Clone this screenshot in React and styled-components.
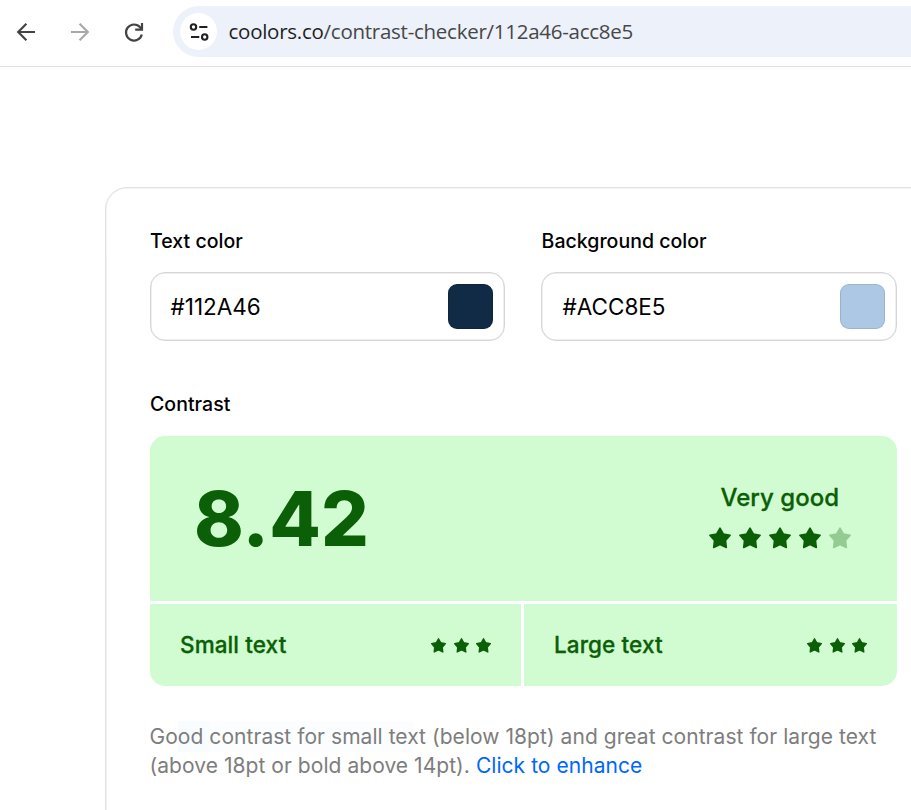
import React from "react";
import styled, { createGlobalStyle } from "styled-components";

const GlobalStyle = createGlobalStyle`
  *, *::before, *::after { box-sizing: border-box; }
  html, body { margin: 0; padding: 0; background: #fff; overflow: hidden; }
  body { font-family: Inter, "Liberation Sans", sans-serif; color: #000; }
`;

const Window = styled.div`
  height: 810px;
  overflow: hidden;
  display: flex;
  flex-direction: column;
`;

const Toolbar = styled.header`
  flex: none;
  height: 67px;
  display: flex;
  align-items: flex-start;
  border-bottom: 1px solid #dfe1e4;
`;

const NavButtons = styled.nav`
  display: flex;
  gap: 26px;
  padding: 18px 0 0 12px;
  width: 173px;
`;

const NavButton = styled.button`
  flex: none;
  width: 28px;
  height: 28px;
  padding: 0;
  border: 0;
  background: none;
  color: ${(p) => (p.$muted ? "#a9a9a9" : "#434343")};
  svg { display: block; }
`;

const AddressBar = styled.div`
  flex: 1;
  height: 51px;
  margin-top: 6px;
  padding-left: 7px;
  display: flex;
  align-items: center;
  border-radius: 26px 0 0 26px;
  background: #ecf1fa;
`;

const SiteInfo = styled.div`
  width: 37px;
  height: 37px;
  border-radius: 50%;
  background: #fff;
  svg { display: block; }
`;

const Url = styled.div`
  margin: -1px 0 0 11.5px;
  font-family: "Open Sans", "Noto Sans", sans-serif;
  font-size: 20.5px;
  letter-spacing: -0.26px;
  line-height: 28px;
  white-space: nowrap;
  color: #474747;
`;

const Host = styled.span`
  color: #1f1f1f;
`;

const Card = styled.main`
  flex: none;
  width: 1200px;
  height: 900px;
  margin: 120px 0 0 105px;
  padding: 40px 0 0 44px;
  border: 1px solid #e2e2e2;
  border-radius: 22px;
  box-shadow: inset 0 0 0 0.5px #e8e8e8;
`;

const Content = styled.div`
  width: 747px;
`;

const Fields = styled.div`
  display: grid;
  grid-template-columns: 355px 356px;
  column-gap: 36px;
`;

const Label = styled.div`
  height: ${(p) => (p.$tall ? "45px" : "44px")};
  padding: 1px 0 0 ${(p) => p.$inset || "0"};
  font-size: 19.5px;
  font-weight: 500;
  letter-spacing: 0.03px;
  line-height: 24px;
`;

const ColorInput = styled.div`
  height: 69px;
  display: flex;
  align-items: center;
  justify-content: space-between;
  padding: 0 11px 0 ${(p) => (p.$inset ? "20.5px" : "19.5px")};
  border: 1px solid #d6d6d6;
  border-radius: 15px;
  box-shadow: inset 0 0 0 0.5px #dedede;
  font-size: 22.5px;
`;

const Swatch = styled.div`
  width: 45px;
  height: 45px;
  border: 1px solid rgba(0, 0, 0, 0.1);
  border-radius: 9px;
  background: ${(p) => p.$color};
`;

const Contrast = styled.section`
  margin-top: 50px;
`;

const Score = styled.div`
  display: grid;
  grid-template-columns: 371px 373px;
  grid-template-rows: 165px 82px;
  gap: 3px;
  border-radius: 15px;
  overflow: hidden;
  color: #0b5f06;
`;

const Overall = styled.div`
  grid-column: 1 / -1;
  display: flex;
  align-items: center;
  justify-content: space-between;
  padding: 0 46px 0 44px;
  background: #d1fbd0;
`;

const Ratio = styled.div`
  margin-top: 1px;
  font-size: 75px;
  font-weight: 800;
  letter-spacing: 0.2px;
  line-height: 90px;
`;

const Verdict = styled.div`
  display: flex;
  flex-direction: column;
  align-items: center;
  margin-top: -5px;
  font-size: 24px;
  font-weight: 500;
  letter-spacing: 0.05px;
  line-height: 30px;
  -webkit-text-stroke: 0.3px currentColor;
`;

const Grade = styled.div`
  display: flex;
  align-items: center;
  justify-content: space-between;
  padding: 0 30px 1px 30px;
  background: #d1fbd0;
  font-size: 22.5px;
  font-weight: 500;
  letter-spacing: 0.1px;
  -webkit-text-stroke: 0.3px currentColor;
`;

const StarRow = styled.div`
  display: flex;
  gap: ${(p) => (p.$large ? "8.1px" : "7.3px")};
  margin-top: ${(p) => (p.$large ? "14px" : "2px")};
`;

const StarIcon = styled.svg`
  display: block;
  width: ${(p) => (p.$large ? "22px" : "15px")};
  height: ${(p) => (p.$large ? "22px" : "15px")};
  opacity: ${(p) => (p.$dim ? 0.3 : 1)};
  fill: currentColor;
  stroke: currentColor;
  stroke-width: ${(p) => (p.$large ? 1.6 : 2)};
  stroke-linejoin: round;
`;

const Note = styled.p`
  position: relative;
  isolation: isolate;
  margin: 36px 0 0 -0.5px;
  font-size: 21px;
  letter-spacing: 0.05px;
  line-height: 29px;
  color: #7d7d7d;
  white-space: nowrap;
`;

const Tint = styled.span`
  position: absolute;
  z-index: -1;
  top: -1px;
  left: 28px;
  width: 236px;
  height: 31px;
  background: linear-gradient(90deg, #f9fcff 31px, #fbfdff 31px);
`;

const Enhance = styled.a`
  color: #0066ff;
`;

function Stars({ count, filled = count, large }) {
  return (
    <StarRow $large={large}>
      {Array.from({ length: count }, (_, i) => (
        <StarIcon key={i} viewBox="0 0 22 22" $large={large} $dim={i >= filled}>
          <path d="M11 1.2 14.3 7 21.1 8.3 16.5 13.5 17.3 20.5 11 17.6 4.7 20.5 5.5 13.5 .9 8.3 7.7 7Z" />
        </StarIcon>
      ))}
    </StarRow>
  );
}

function Field({ label, value, labelInset }) {
  return (
    <div>
      <Label $inset={labelInset}>{label}</Label>
      <ColorInput $inset={labelInset}>
        {value}
        <Swatch $color={value} />
      </ColorInput>
    </div>
  );
}

function Arrow() {
  return (
    <svg width="28" height="28" fill="none" stroke="currentColor" strokeWidth="2.2">
      <path d="M23 14H7M14.4 5.8 6.2 14l8.2 8.2" />
    </svg>
  );
}

function ArrowForward() {
  return (
    <svg width="28" height="28" fill="none" stroke="currentColor" strokeWidth="2.2">
      <path d="M5 14h16M13.6 5.8l8.2 8.2-8.2 8.2" />
    </svg>
  );
}

export default function App() {
  return (
    <>
      <GlobalStyle />
      <Window>
        <Toolbar>
          <NavButtons>
            <NavButton aria-label="Back"><Arrow /></NavButton>
            <NavButton aria-label="Forward" $muted><ArrowForward /></NavButton>
            <NavButton aria-label="Reload">
              <svg width="28" height="28" fill="none" stroke="currentColor" strokeWidth="2.2">
                <path d="M21.8 16.4A8 8 0 1 1 20.2 9.4L22 11.6M22 5v6.6h-6.8" />
              </svg>
            </NavButton>
          </NavButtons>
          <AddressBar>
            <SiteInfo>
              <svg width="37" height="37" fill="none" stroke="#202124" strokeWidth="2.1">
                <circle cx="13.5" cy="14" r="2.7" />
                <path d="M19.2 14h8.2M11 24h8.3" />
                <circle cx="24.7" cy="24" r="2.7" />
              </svg>
            </SiteInfo>
            <Url><Host>coolors.co</Host>/contrast-checker/112a46-acc8e5</Url>
          </AddressBar>
        </Toolbar>
        <Card>
          <Content>
            <Fields>
              <Field label="Text color" value="#112A46" />
              <Field label="Background color" value="#ACC8E5" labelInset="0.6px" />
            </Fields>
            <Contrast>
              <Label $tall>Contrast</Label>
              <Score>
                <Overall>
                  <Ratio>8.42</Ratio>
                  <Verdict>
                    Very good
                    <Stars count={5} filled={4} large />
                  </Verdict>
                </Overall>
                <Grade>Small text<Stars count={3} /></Grade>
                <Grade>Large text<Stars count={3} /></Grade>
              </Score>
            </Contrast>
            <Note>
              <Tint />
              Good contrast for small text (below 18pt) and great contrast for large text<br />
              (above 18pt or bold above 14pt). <Enhance>Click to enhance</Enhance>
            </Note>
          </Content>
        </Card>
      </Window>
    </>
  );
}
